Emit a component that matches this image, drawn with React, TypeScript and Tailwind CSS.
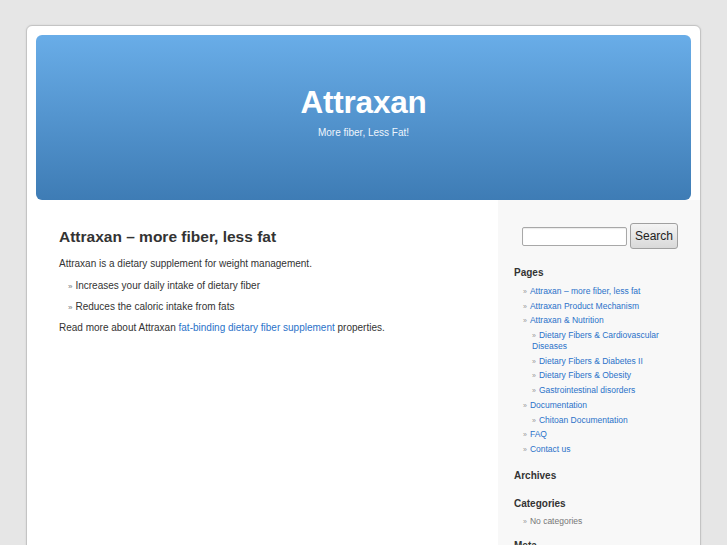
const pages = [
  { label: 'Attraxan – more fiber, less fat' },
  { label: 'Attraxan Product Mechanism' },
  {
    label: 'Attraxan & Nutrition',
    children: [
      'Dietary Fibers & Cardiovascular Diseases',
      'Dietary Fibers & Diabetes II',
      'Dietary Fibers & Obesity',
      'Gastrointestinal disorders',
    ],
  },
  { label: 'Documentation', children: ['Chitoan Documentation'] },
  { label: 'FAQ' },
  { label: 'Contact us' },
];

function Raquo() {
  return <span className="inline-block text-[#999] text-[7px] leading-[11px] mr-[3px]">»</span>;
}

export default function App() {
  return (
    <div className="h-[545px] overflow-hidden bg-[#e6e6e6] pt-[25px] pl-[26px] font-['Liberation_Sans',Arial,sans-serif] text-[#333]">
      <div className="w-[675px] h-[600px] bg-white border border-[#c4c4c4] rounded-[6px] shadow-[0_0_2px_rgba(0,0,0,0.1)] overflow-hidden flex flex-col">
        {/* Header */}
        <div className="mx-[9px] mt-[9px] h-[165px] rounded-[6px] bg-gradient-to-b from-[#69ade8] to-[#3e7cb5] flex flex-col items-center text-white">
          <h1 className="mt-[48px] text-[31.5px] leading-[38px] font-bold tracking-[-0.2px]">Attraxan</h1>
          <p className="mt-[6px] text-[10px] leading-[12px] text-[#eef5fc]">More fiber, Less Fat!</p>
        </div>

        <div className="flex flex-1">
          {/* Main */}
          <div className="flex-1 pl-[32px] pt-[25px] text-[10px]">
            <h2 className="text-[15.5px] leading-[24px] font-bold text-[#333]">Attraxan – more fiber, less fat</h2>
            <p className="mt-[6px] leading-[18px]">Attraxan is a dietary supplement for weight management.</p>
            <ul className="mt-[3px] pl-[9px]">
              <li className="leading-[20px]"><span className="text-[#777] text-[8px] mr-[3px]">»</span>Increases your daily intake of dietary fiber</li>
              <li className="leading-[20px]"><span className="text-[#777] text-[8px] mr-[3px]">»</span>Reduces the caloric intake from fats</li>
            </ul>
            <p className="leading-[20px]">
              Read more about Attraxan <span className="text-[#2a72c9]">fat-binding dietary fiber supplement</span> properties.
            </p>
          </div>

          {/* Sidebar */}
          <div className="w-[202px] bg-[#f8f8f8] pt-[23px] pl-[16px]">
            <div className="flex items-center gap-[3px] pl-[8px]">
              <input className="w-[105px] h-[19px] bg-white border border-[#a8a8a8] rounded-[2px] shadow-[inset_0_1px_1px_rgba(0,0,0,0.08)]" />
              <button className="w-[48px] h-[26px] rounded-[3px] border border-[#a0a0a0] bg-gradient-to-b from-[#f4f4f4] to-[#d9d9d9] text-[12px] text-[#222]">Search</button>
            </div>

            <h3 className="mt-[18px] text-[10px] leading-[12px] font-bold text-[#333]">Pages</h3>
            <ul className="mt-[7px] pl-[9px] text-[8.5px] leading-[11px] text-[#2a72c9]">
              {pages.map((p) => (
                <li key={p.label} className="mb-[3.7px]">
                  <Raquo />
                  {p.label}
                  {p.children && (
                    <ul className="mt-[3.7px] pl-[9px]">
                      {p.children.map((c) => (
                        <li key={c} className="mb-[3.7px] w-[150px]">
                          <Raquo />
                          {c}
                        </li>
                      ))}
                    </ul>
                  )}
                </li>
              ))}
            </ul>

            <h3 className="mt-[15px] text-[10px] leading-[12px] font-bold text-[#333]">Archives</h3>
            <h3 className="mt-[16px] text-[10px] leading-[12px] font-bold text-[#333]">Categories</h3>
            <ul className="mt-[6px] pl-[9px] text-[8.5px] leading-[11px] text-[#777]">
              <li><Raquo />No categories</li>
            </ul>
            <h3 className="mt-[13px] text-[10px] leading-[12px] font-bold text-[#333]">Meta</h3>
          </div>
        </div>
      </div>
    </div>
  );
}
